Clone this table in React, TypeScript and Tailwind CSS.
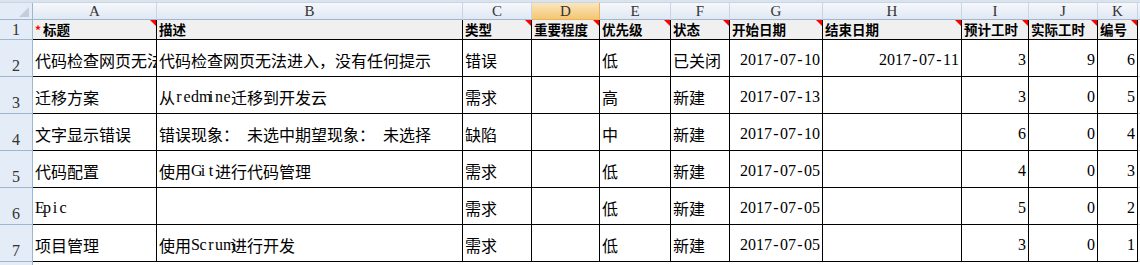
import React from "react";

const COLS = ["A", "B", "C", "D", "E", "F", "G", "H", "I", "J", "K"];

const HEAD = ["标题", "描述", "类型", "重要程度", "优先级", "状态", "开始日期", "结束日期", "预计工时", "实际工时", "编号"];
const HEAD_MARK = [true, false, true, true, true, true, true, true, true, true, true];

const ROWS: string[][] = [
  ["代码检查网页无法进入，没有任何提示", "代码检查网页无法进入，没有任何提示", "错误", "", "低", "已关闭", "2017-07-10", "2017-07-11", "3", "9", "6"],
  ["迁移方案", "从redmine迁移到开发云", "需求", "", "高", "新建", "2017-07-13", "", "3", "0", "5"],
  ["文字显示错误", "错误现象： 未选中期望现象： 未选择", "缺陷", "", "中", "新建", "2017-07-10", "", "6", "0", "4"],
  ["代码配置", "使用Git进行代码管理", "需求", "", "低", "新建", "2017-07-05", "", "4", "0", "3"],
  ["Epic", "", "需求", "", "低", "新建", "2017-07-05", "", "5", "0", "2"],
  ["项目管理", "使用Scrum进行开发", "需求", "", "低", "新建", "2017-07-05", "", "3", "0", "1"],
];

const RIGHT = [false, false, false, false, false, false, true, true, true, true, true];

function Mixed({ text }: { text: string }) {
  const parts = text.split(/([\u0000-\u00ff]+)/).filter((p) => p.length > 0);
  return (
    <>
      {parts.map((p, i) =>
        /^[\u0000-\u00ff]+$/.test(p) ? (
          <span key={i} className="inline-flex font-['Liberation_Serif',serif] text-[16px]">
            {Array.from(p).map((ch, j) => (
              <span key={j} className="inline-block w-[8px] text-center">
                {ch === " " ? "\u00a0" : ch}
              </span>
            ))}
          </span>
        ) : (
          <span key={i}>{p}</span>
        )
      )}
    </>
  );
}

function Mark() {
  return (
    <span className="absolute top-0 right-0 w-0 h-0 border-l-[6px] border-l-transparent border-t-[6px] border-t-[#ff0000]" />
  );
}

export default function App() {
  return (
    <div className="w-[1140px] h-[265px] overflow-hidden bg-white font-['Noto_Sans_CJK_SC',sans-serif] text-black">
      <div className="h-[3px] bg-[#dbe3ec] border-b border-[#c9d5e3]" />
      <div className="grid grid-cols-[33px_124px_306px_69px_68px_71px_59px_93px_139px_67px_69px_40px_1fr] grid-rows-[17px_20px_repeat(6,37px)_1fr] h-[262px]">
        {/* column header row */}
        <div className="bg-[#e4ecf7] border-r border-b border-[#9eb6ce] flex items-end justify-end pr-[3px] pb-[2px]">
          <svg width="10" height="10" viewBox="0 0 10 10">
            <polygon points="10,0 10,10 0,10" fill="#c3cedb" />
          </svg>
        </div>
        {COLS.map((c) => (
          <div
            key={c}
            className={
              c === "D"
                ? "bg-linear-to-b from-[#fbe6bd] to-[#f3c672] border-r border-b border-[#e9b35a] flex items-center justify-center font-['Liberation_Serif',serif] text-[15px] leading-none text-[#333]"
                : "bg-linear-to-b from-[#f5f8fc] to-[#e0e8f3] border-r border-b border-r-[#c9d6e6] border-b-[#9eb6ce] flex items-center justify-center font-['Liberation_Serif',serif] text-[15px] leading-none text-[#333]"
            }
          >
            {c}
          </div>
        ))}
        <div className="bg-linear-to-b from-[#f5f8fc] to-[#e0e8f3] border-b border-[#9eb6ce]" />

        {/* row 1: headers */}
        <div className="bg-[#e4ecf7] border-r border-b border-[#9eb6ce] flex items-center justify-center font-['Liberation_Serif',serif] text-[16px] leading-none text-[#333]">
          1
        </div>
        {HEAD.map((h, i) => (
          <div
            key={h}
            className="relative bg-[#f0f0f0] border-r border-b border-black flex items-center pl-[2px] text-[13.5px] font-bold leading-none whitespace-nowrap overflow-hidden"
          >
            {i === 0 && <span className="text-[#ff0000] text-[12px] mr-[2px] font-bold">*</span>}
            {h}
            {HEAD_MARK[i] && <Mark />}
          </div>
        ))}
        <div className="border-b border-[#d8d8d8]" />

        {/* data rows */}
        {ROWS.map((row, ri) => (
          <React.Fragment key={ri}>
            <div className="bg-[#e4ecf7] border-r border-b border-[#9eb6ce] flex items-end justify-center pb-[2px] font-['Liberation_Serif',serif] text-[16px] leading-none text-[#333]">
              {ri + 2}
            </div>
            {row.map((v, ci) => (
              <div
                key={ci}
                className={
                  RIGHT[ci]
                    ? "border-r border-b border-black flex items-center justify-end pt-[3px] pr-[2px] text-[16px] leading-none whitespace-nowrap overflow-hidden"
                    : "border-r border-b border-black flex items-center pt-[3px] pl-[2px] text-[16px] leading-none whitespace-nowrap overflow-hidden"
                }
              >
                <Mixed text={v} />
              </div>
            ))}
            <div className="border-b border-[#d8d8d8]" />
          </React.Fragment>
        ))}
        <div className="bg-[#e4ecf7] border-r border-[#9eb6ce]" />
        <div className="col-span-12" />
      </div>
    </div>
  );
}
